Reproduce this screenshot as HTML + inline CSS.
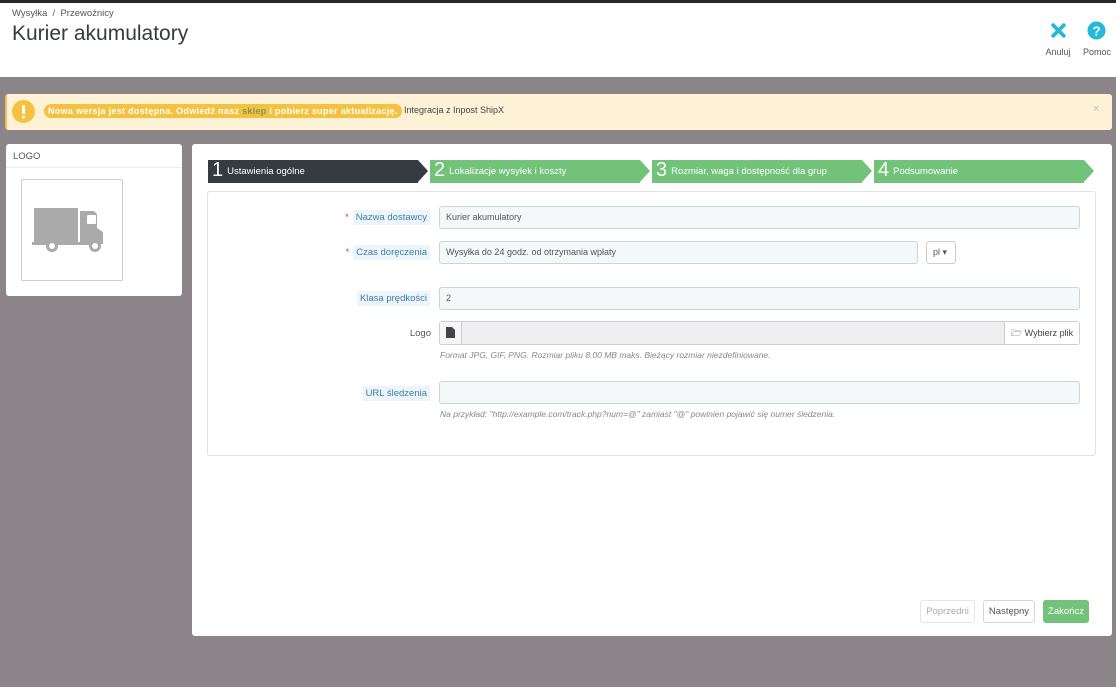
<!DOCTYPE html>
<html><head><meta charset="utf-8"><style>
*{box-sizing:border-box;margin:0;padding:0}
body{width:1116px;height:687px;background:#8b8589;font-family:"Liberation Sans",sans-serif;position:relative;overflow:hidden;color:#555}
.abs{position:absolute}
.hdr{left:0;top:0;width:1116px;height:77px;background:#fff;border-top:3px solid #25272b}
.crumb{left:12px;top:8px;font-size:9.5px;color:#555}
h1{position:absolute;left:12px;top:22px;font-size:21px;font-weight:normal;color:#363a41}
.tb{font-size:9px;color:#555;text-align:center}
.alert{left:5px;top:94px;width:1107px;height:36px;background:#fdf2d5;border-left:2px solid #f0c060;border-radius:3px}
.panel{background:#fff;border-radius:3px}
.step{top:160px;height:23px;color:#fff;font-size:9.5px;line-height:23px}
.step b{font-weight:normal;font-size:20px;vertical-align:middle;margin:0 4px 0 4px;position:relative;top:-1px}
.step i{position:absolute;right:-10px;top:0;width:0;height:0;border-top:11.5px solid transparent;border-bottom:11.5px solid transparent;border-left:10px solid #72c279}
.inp{background:#f5f8f9;border:1px solid #c7d6db;border-radius:3px;height:23px;font-size:9px;line-height:21px;padding-left:6px;color:#555}
.lbl{font-size:9.5px;color:#555;text-align:right}
.lbl .t{background:#eef5fa;color:#3a7ea8;padding:2px 3px}
.req{color:#e0383e;margin-right:4px}
.help{font-size:8.5px;font-style:italic;color:#888}
.btn{top:600px;height:23px;border:1px solid #d5d5d5;border-radius:3px;background:#fff;font-size:9.5px;line-height:21px;text-align:center}
</style></head><body>
<div class="abs hdr"></div>
<div class="abs crumb">Wysyłka &nbsp;/&nbsp; Przewoźnicy</div>
<h1>Kurier akumulatory</h1>
<svg class="abs" style="left:1050px;top:22px" width="17" height="17" viewBox="0 0 16 16"><path d="M3 3L13 13M13 3L3 13" stroke="#25b9d7" stroke-width="3.6" stroke-linecap="round"/></svg>
<div class="abs tb" style="left:1040px;top:47px;width:36px">Anuluj</div>
<svg class="abs" style="left:1087px;top:21px" width="19" height="19" viewBox="0 0 20 20"><circle cx="10" cy="10" r="9.5" fill="#25b9d7"/><text x="10" y="15" font-size="14" font-weight="bold" fill="#fff" text-anchor="middle" font-family="Liberation Sans">?</text></svg>
<div class="abs tb" style="left:1078px;top:47px;width:38px">Pomoc</div>

<div class="abs alert"></div>
<svg class="abs" style="left:12px;top:100px" width="23" height="23"><circle cx="11.5" cy="11.5" r="11.5" fill="#f5c13e"/><rect x="10" y="5" width="3" height="9" rx="1" fill="#fff"/><rect x="10" y="15.5" width="3" height="3" rx="1" fill="#fff"/></svg>
<div class="abs" style="left:44px;top:104px;height:14px;width:358px;background:#f5c13e;border-radius:7px;font-size:9px;line-height:14px;color:#fff;font-weight:bold;padding-left:4px;white-space:nowrap;letter-spacing:0.3px">Nowa wersja jest dostępna. Odwiedź nasz <span style="color:#7a9a60">sklep</span> i pobierz super aktualizację.</div>
<div class="abs" style="left:404px;top:105px;font-size:9px;color:#444">Integracja z Inpost ShipX</div>
<div class="abs" style="left:1093px;top:103px;font-size:11px;color:#bbb">×</div>

<div class="abs panel" style="left:6px;top:144px;width:176px;height:152px"></div>
<div class="abs" style="left:13px;top:151px;font-size:9.5px;color:#555">LOGO</div>
<div class="abs" style="left:6px;top:167px;width:176px;height:1px;background:#eee"></div>
<div class="abs" style="left:21px;top:179px;width:102px;height:102px;border:1px solid #ccc;border-radius:2px;background:#fff"></div>
<svg class="abs" style="left:32px;top:206px" width="80" height="50" viewBox="0 0 80 50"><rect x="2" y="2" width="44" height="34" fill="#aaa"/><path d="M48 5h14l3 3v14l6 4v12H48z" fill="#aaa"/><rect x="55" y="9" width="9" height="9" rx="1" fill="#fff"/><rect x="0" y="36" width="60" height="3" fill="#aaa"/><circle cx="20" cy="40" r="6" fill="#aaa"/><circle cx="20" cy="40" r="3" fill="#fff"/><circle cx="63" cy="40" r="6" fill="#aaa"/><circle cx="63" cy="40" r="3" fill="#fff"/></svg>

<div class="abs panel" style="left:192px;top:144px;width:920px;height:492px"></div>
<div class="abs step" style="left:208px;width:210px;background:#363a41"><b>1</b>Ustawienia ogólne<i style="border-left-color:#363a41"></i></div>
<div class="abs step" style="left:430px;width:210px;background:#72c279"><b>2</b>Lokalizacje wysyłek i koszty<i></i></div>
<div class="abs step" style="left:652px;width:210px;background:#72c279"><b>3</b>Rozmiar, waga i dostępność dla grup<i></i></div>
<div class="abs step" style="left:874px;width:210px;background:#72c279"><b>4</b>Podsumowanie<i></i></div>

<div class="abs" style="left:207px;top:191px;width:889px;height:265px;border:1px solid #dde3e6;border-radius:3px"></div>
<div class="abs lbl" style="left:300px;top:212px;width:130px"><span class="req">*</span><span class="t">Nazwa dostawcy</span></div>
<div class="abs inp" style="left:439px;top:206px;width:641px">Kurier akumulatory</div>
<div class="abs lbl" style="left:300px;top:247px;width:130px"><span class="req">*</span><span class="t">Czas doręczenia</span></div>
<div class="abs inp" style="left:439px;top:241px;width:479px">Wysyłka do 24 godz. od otrzymania wpłaty</div>
<div class="abs" style="left:926px;top:241px;width:30px;height:23px;border:1px solid #ccc;border-radius:3px;background:#fff;font-size:9px;line-height:21px;padding-left:6px">pl ▾</div>
<div class="abs lbl" style="left:300px;top:293px;width:130px"><span class="t">Klasa prędkości</span></div>
<div class="abs inp" style="left:439px;top:287px;width:641px">2</div>
<div class="abs lbl" style="left:300px;top:328px;width:131px">Logo</div>
<div class="abs" style="left:439px;top:321px;width:641px;height:24px;border:1px solid #ccd;border-radius:3px;background:#eee"></div>
<div class="abs" style="left:440px;top:322px;width:22px;height:22px;background:#f5f5f5;border-right:1px solid #ccc"></div>
<svg class="abs" style="left:446px;top:327px" width="9" height="11"><path d="M0 0h6l3 3v8H0z" fill="#444"/></svg>
<div class="abs" style="left:1004px;top:322px;width:75px;height:22px;background:#fff;border-left:1px solid #ccc;font-size:9px;line-height:22px;padding-left:6px;color:#444">🗁 Wybierz plik</div>
<div class="abs help" style="left:440px;top:350px">Format JPG, GIF, PNG. Rozmiar pliku 8.00 MB maks. Bieżący rozmiar niezdefiniowane.</div>
<div class="abs lbl" style="left:300px;top:388px;width:130px"><span class="t">URL śledzenia</span></div>
<div class="abs inp" style="left:439px;top:381px;width:641px"></div>
<div class="abs help" style="left:440px;top:409px">Na przykład: "http://example.com/track.php?num=@" zamiast "@" powinien pojawić się numer śledzenia.</div>

<div class="abs btn" style="left:920px;width:55px;color:#aaa;border-color:#e5e5e5">Poprzedni</div>
<div class="abs btn" style="left:983px;width:52px;color:#555">Następny</div>
<div class="abs btn" style="left:1043px;width:46px;background:#72c279;border-color:#72c279;color:#fff">Zakończ</div>
</body></html>
